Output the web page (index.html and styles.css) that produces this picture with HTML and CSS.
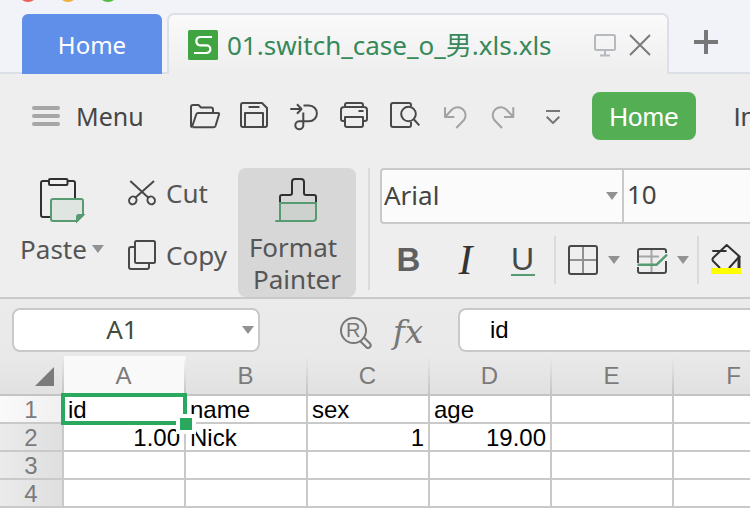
FILE: index.html
```html
<!DOCTYPE html>
<html lang="en">
<head>
<meta charset="utf-8">
<title>01.switch_case_o_男.xls.xls</title>
<link rel="stylesheet" href="styles.css">
</head>
<body>
<header class="titlebar">
  <div class="lights"><i class="light red"></i><i class="light amber"></i><i class="light green"></i></div>
  <nav class="tabs">
    <button class="tab-home">Home</button>
    <div class="tab-doc">
      <svg class="logo" width="30" height="30" viewBox="0 0 30 30"><rect width="30" height="30" rx="1.5" fill="#40a441"/><path d="M24 7H11.5a4.300 4.300 0 0 0 0 8.300H18.500a3.700 3.700 0 0 1 0 7.700H6" fill="none" stroke="#fff" stroke-width="2.200"/></svg>
      <span class="doc-name">01.switch_case_o_男.xls.xls</span>
      <svg width="24" height="24" viewBox="0 0 24 24" fill="none" stroke="#b6babf" stroke-width="2"><rect x="2" y="2" width="20" height="15" rx="1.500"/><path d="M12 17v5M7 22.500h10"/></svg>
      <button class="bare close" aria-label="Close tab"><svg width="22" height="22" viewBox="0 0 22 22" fill="none" stroke="#7b7b7d" stroke-width="2"><path d="M1 1L21 21M21 1L1 21"/></svg></button>
    </div>
    <button class="bare add" aria-label="New tab"><svg width="24" height="24" viewBox="0 0 24 24" stroke="#77777a" stroke-width="4"><path d="M12 0V24M0 12H24"/></svg></button>
  </nav>
</header>

<section class="quickbar">
  <button class="bare menu"><svg width="28" height="20" viewBox="0 0 28 20" stroke="#a6a6a6" stroke-width="4" stroke-linecap="round"><path d="M2 2H26M2 10H26M2 18H26"/></svg>Menu</button>
  <div class="quick-icons">
    <button class="bare" aria-label="Open"><svg class="ic" viewBox="0 0 32 32"><path d="M3 27Q2 27 2 26V7Q2 5 4 5H9.500L12 7.500H22Q24 7.500 24 9.500V13M3 27L7.300 14.300Q7.800 13 9 13H29Q30.500 13 30 14.500L26.500 26Q26 27.300 24.500 27.300H3.500"/></svg></button>
    <button class="bare" aria-label="Save"><svg class="ic" viewBox="0 0 32 32"><path d="M4 3H23L28 8V25Q28 27 26 27H4Q2 27 2 25V5Q2 3 4 3ZM9.500 7H20.500M6 27V13H24V27"/></svg></button>
    <button class="bare" aria-label="Export to PDF"><svg class="ic" viewBox="0 0 32 32"><path d="M1.300 9H12M8 4.300L12.500 9L8 13.700M14.500 5.500H20A7.900 7.900 0 0 1 20 21.300H10A4 4 0 1 0 14.300 25V12.500"/></svg></button>
    <button class="bare" aria-label="Print"><svg class="ic" viewBox="0 0 32 32"><path d="M6 7V5Q6 3 8 3H22Q24 3 24 5V7M6 21H4Q2 21 2 19V10Q2 7 5 7H25Q28 7 28 10V19Q28 21 26 21H24M6 17H24V25Q24 27 22 27H8Q6 27 6 25ZM19.500 11H24.500"/></svg></button>
    <button class="bare" aria-label="Print preview"><svg class="ic" viewBox="0 0 32 32"><path d="M22 6V5Q22 3 20 3H4Q2 3 2 5V25Q2 27 4 27H20Q22 27 22 25V22M25 19.500L30.300 25.300"/><circle cx="19.500" cy="14" r="7.300"/></svg></button>
    <button class="bare" aria-label="Undo"><svg class="ic pale" viewBox="0 0 32 32"><path d="M6 7.300V17H15.300M6 17L13 9.500A8 8 0 0 1 25 20L17.300 28"/></svg></button>
    <button class="bare" aria-label="Redo"><svg class="ic pale" viewBox="0 0 32 32"><path d="M24.300 7.300V17H15M24.300 17L17.300 9.500A8 8 0 0 0 5.300 20L13 28"/></svg></button>
    <button class="bare" aria-label="More commands"><svg class="ic more" viewBox="0 0 32 32"><path d="M7 11H21M7.700 16.700L14 23L20.300 16.700"/></svg></button>
  </div>
  <button class="ribbon-tab active">Home</button>
  <button class="ribbon-tab">Insert</button>
</section>

<section class="ribbon">
  <button class="bare paste">
    <svg width="48" height="48" viewBox="0 0 48 48" fill="none" stroke="#303030" stroke-width="2"><path d="M10.500 5H5Q3 5 3 7V39Q3 41 5 41H13M29.500 5H35Q37 5 37 7V23"/><rect x="11" y="3" width="18.500" height="6" rx="1"/><path d="M15 23H43Q45 23 45 25V39L39 45H15Q13 45 13 43V25Q13 23 15 23Z" fill="#dfe6e1" stroke="#589b73"/><path d="M45 39H41Q39 39 39 41V45Z" fill="#589b73" stroke="#589b73"/></svg>
    <span class="label">Paste<i class="caret"></i></span>
  </button>
  <div class="clip-list">
    <button class="bare"><svg class="ic" viewBox="0 0 32 32"><path d="M3.300 4L21.700 21M27 4L8 21"/><ellipse cx="5.800" cy="23.400" rx="3.600" ry="4" transform="rotate(30 5.800 23.400)"/><ellipse cx="24.200" cy="23.400" rx="3.600" ry="4" transform="rotate(-30 24.200 23.400)"/></svg>Cut</button>
    <button class="bare"><svg class="ic" viewBox="0 0 32 32"><rect x="8" y="2" width="20" height="22" rx="1.500"/><path d="M8 8H4Q2 8 2 10V28Q2 30 4 30H20Q22 30 22 28V24"/></svg>Copy</button>
  </div>
  <button class="bare painter">
    <svg width="48" height="48" viewBox="0 0 48 48" fill="none" stroke="#303030" stroke-width="2"><path d="M7 26V21Q7 19 9 19H17Q19 19 19 17V6Q19 3 22 3H28Q31 3 31 6V17Q31 19 33 19H41Q43 19 43 21V26"/><path d="M7 27H43V42Q43 45 40 45H7Z" fill="#cdd2ce" stroke="#589b73"/><path d="M2.300 45H7" stroke="#589b73"/></svg>
    <span>Format</span><span class="indent">Painter</span>
  </button>
  <div class="font-group">
    <div class="selects">
      <label class="pick family"><select aria-label="Font"><option>Arial</option></select></label>
      <label class="pick size"><select aria-label="Font size"><option>10</option></select></label>
    </div>
    <div class="formats">
      <button class="bare fmt bold" aria-label="Bold">B</button>
      <button class="bare fmt italic" aria-label="Italic">I</button>
      <button class="bare fmt under" aria-label="Underline"><span>U</span></button>
      <button class="bare drop divided" aria-label="Borders"><svg class="ic" viewBox="0 0 32 32"><path d="M16 3V29M3 16H29" stroke="#909090"/><rect x="2" y="2" width="28" height="28" rx="2"/></svg><i class="caret"></i></button>
      <button class="bare drop" aria-label="Table style"><svg class="ic" viewBox="0 0 32 32"><path d="M15.500 5V29M3 12.500H23" stroke="#a5a5a5"/><path d="M2 19V7Q2 5 4 5H28Q30 5 30 7V9M2 23V27Q2 29 4 29H28Q30 29 30 27V17" /><path d="M1.500 20.700H20.700L31 10.700" stroke="#589b73" stroke-width="2.500"/></svg><i class="caret"></i></button>
      <button class="bare drop divided" aria-label="Fill colour"><svg class="ic" viewBox="0 0 32 32"><path d="M10 24L3 17Q2 15.500 3 14L16.700 1L29.500 12.500L19 24M2.300 7H16.500" stroke="#303030"/><path d="M29 12V24" stroke="#303030" stroke-width="3"/><path d="M1 27H31" stroke="#ff0" stroke-width="6"/></svg></button>
    </div>
  </div>
</section>

<main class="sheet">
  <div class="formula-bar">
    <label class="name-box pick"><input value="A1" aria-label="Name box"></label>
    <button class="bare lookup" aria-label="Look up"><svg width="36" height="36" viewBox="0 0 36 36" fill="none" stroke="#777" stroke-width="2"><circle cx="15.500" cy="15.500" r="12.500"/><path d="M22 26L28.500 32.500Q30.500 33.500 32 32Q33.500 30.500 32 28.500L26 22.500"/><text x="8" y="22" class="lookup-r">R</text></svg></button>
    <button class="bare fx" aria-label="Insert function">fx</button>
    <input class="formula" value="id" aria-label="Formula">
  </div>
  <table>
    <colgroup><col class="c-head"><col span="6" class="c-data"></colgroup>
    <thead>
      <tr><th class="corner"><svg width="19" height="19" viewBox="0 0 19 19"><path d="M19 0V19H0Z" fill="#7b7b7b"/></svg></th><th scope="col" class="on">A</th><th scope="col">B</th><th scope="col">C</th><th scope="col">D</th><th scope="col">E</th><th scope="col">F</th></tr>
    </thead>
    <tbody>
      <tr><th scope="row" class="on">1</th><td class="cursor">id</td><td>name</td><td>sex</td><td>age</td><td></td><td></td></tr>
      <tr><th scope="row">2</th><td class="num">1.00</td><td>Nick</td><td class="num">1</td><td class="num">19.00</td><td></td><td></td></tr>
      <tr><th scope="row">3</th><td></td><td></td><td></td><td></td><td></td><td></td></tr>
      <tr><th scope="row">4</th><td></td><td></td><td></td><td></td><td></td><td></td></tr>
    </tbody>
  </table>
</main>
</body>
</html>
```
FILE: styles.css
```css
*, *::before, *::after { box-sizing: border-box; }
body {
  margin: 0;
  overflow: hidden;
  background: #eee;
  color: #555;
  font: 26px/32px "Noto Sans", "Noto Sans CJK SC", sans-serif;
}
svg { display: block; flex: none; }
button, input, select { font: inherit; color: inherit; }
.bare { border: 0; padding: 0; background: none; display: flex; align-items: center; justify-content: center; flex: none; }
.ic { width: 32px; height: 32px; fill: none; stroke: #484848; stroke-width: 2; stroke-linejoin: round; }
.pale { stroke: #a2a2a2; }
.more { stroke: #777; }
.caret { width: 12px; height: 8px; background: #929292; clip-path: polygon(0 0, 100% 0, 50% 100%); }

/* Title bar and document tabs */
.titlebar { position: relative; height: 74px; overflow: hidden; background: #f2f3f8; box-shadow: inset 0 -2px #dcdfe7; }
.lights { position: absolute; top: -18px; left: 18px; display: flex; gap: 20px; }
.light { width: 20px; height: 20px; border-radius: 50%; }
.red { background: #ec5f57; }
.amber { background: #f0b03f; }
.green { background: #51bb3f; }
.tabs { display: flex; height: 100%; padding: 13px 0 0 22px; }
.tab-home { width: 140px; margin-top: 1px; padding: 2px 0 0; border: 0; border-radius: 6px 6px 0 0; background: #608fe9; color: #fff; font-size: 24px; }
.tab-doc {
  display: flex; align-items: center; width: 502px; margin-left: 5px; padding: 0 16px 0 19px;
  border: 2px solid #dcdfe7; border-bottom: 0; border-radius: 7px 7px 0 0;
  background: linear-gradient(#fafafa, #eee); color: #36895a;
}
.doc-name { flex: 1; margin-left: 9px; white-space: nowrap; }
.close { margin-left: 12px; }
.add { margin: 0 25px; padding-bottom: 4px; }

/* Quick access */
.quickbar { display: flex; align-items: center; height: 94px; padding: 0 0 10px 32px; overflow: hidden; }
.menu { width: 148px; justify-content: flex-start; gap: 16px; color: #464646; font-size: 25px; }
.quick-icons { display: flex; flex: none; margin-right: 12px; }
.quick-icons .bare { width: 50px; height: 48px; }
.ribbon-tab {
  flex: none; min-width: 104px; height: 48px; padding: 2px 17px 0; margin-right: 18px; border: 0; border-radius: 8px;
  background: none; color: #464646; font: 26px/46px "Liberation Sans", sans-serif;
}
.ribbon-tab.active { background: #53ae54; color: #fff; }

/* Ribbon */
.ribbon { display: flex; height: 131px; padding-left: 12px; border-bottom: 2px solid #c9c9c9; overflow: hidden; }
.paste { width: 100px; flex-direction: column; justify-content: flex-start; padding-top: 8px; gap: 9px; }
.label { display: flex; align-items: center; gap: 5px; }
.clip-list { display: flex; flex: none; flex-direction: column; justify-content: flex-start; gap: 30px; width: 126px; padding: 9px 0 0 15px; }
.clip-list .bare { justify-content: flex-start; gap: 7px; }
.painter { width: 118px; flex-direction: column; align-items: center; justify-content: flex-start; padding-top: 8px; border-radius: 8px; background: #d7d7d7; }
.painter svg { margin-bottom: 7px; }
.painter span { margin-right: 8px; }
.painter .indent { margin: 0; }
.font-group { flex: 1; min-width: 0; margin-left: 12px; padding-left: 10px; border-left: 2px solid #dadada; height: 122px; }
.selects { display: flex; height: 56px; }
.pick { position: relative; }
.pick::after { content: ""; position: absolute; right: 6px; top: 24px; width: 12px; height: 8px; background: #929292; clip-path: polygon(0 0, 100% 0, 50% 100%); }
.pick select { width: 100%; height: 56px; padding: 0 2px 2px; border: 2px solid #c9c9c9; background: #fbfbfb; color: #444; appearance: none; }
.family { flex: none; width: 244px; }
.family select { border-radius: 4px 0 0 4px; }
.size { flex: 1 0 160px; margin-left: -2px; }
.size select { padding: 0 3px 4px; }
.formats { display: flex; align-items: center; height: 72px; }
.fmt { width: 57px; height: 48px; }
.bold { color: #606060; font: bold 33px/48px "Liberation Sans", sans-serif; }
.italic { color: #333; font: italic 42px/48px "Liberation Serif", serif; }
.under { color: #484848; font: 32px/30px "Liberation Sans", sans-serif; }
.under span { width: 24px; border-bottom: 2px solid #589b73; }
.drop { gap: 9px; height: 48px; padding: 0 5px 0 11px; }
.divided { margin-left: 3px; border-left: 2px solid #dadada; }

/* Formula bar */
.sheet { overflow: hidden; background: linear-gradient(#ebebeb, #e9e9e9 57px); }
.formula-bar { display: flex; height: 57px; padding: 9px 0 4px 12px; }
.name-box { width: 248px; }
.name-box::after { top: 18px; }
.name-box input { width: 100%; height: 44px; padding: 0 28px 2px 0; border: 2px solid #c9c9c9; border-radius: 8px; background: #fff; color: #434b3d; text-align: center; }
.lookup { width: 36px; margin-left: 78px; padding-top: 6px; }
.lookup-r { font: 20px "Liberation Sans", sans-serif; fill: #777; stroke: none; }
.fx { width: 48px; margin: 4px 26px 0 10px; color: #777; font: italic 32px/40px "DejaVu Serif", serif; }
.formula { flex: 1; min-width: 0; height: 44px; padding: 0 30px; border: 2px solid #c9c9c9; border-right: 0; border-radius: 8px 0 0 8px; background: #fff; color: #000; font: 24px "Liberation Sans", sans-serif; }

/* Grid */
table { width: 796px; table-layout: fixed; border-collapse: separate; border-spacing: 0; font: 24px/24px "Liberation Sans", sans-serif; }
.c-head { width: 64px; }
.c-data { width: 122px; }
th, td { padding: 2px 0 0; border: 0 solid #c9c9c9; border-width: 0 2px 2px 0; }
th { color: #7b7b7b; font-weight: normal; }
thead th {
  height: 40px; padding-right: 3px; border-right: 0; border-bottom-color: #c4c4c4;
  background: linear-gradient(#e9e9e9, #c4c4c4) right / 2px 100% no-repeat, linear-gradient(#e9e9e9, #e1e1e1);
}
thead .on { background: linear-gradient(#f9f9f9, #c4c4c4) right / 2px 100% no-repeat, #f9f9f9; }
.corner svg { margin: 0 7px 0 auto; }
tbody th { height: 28px; background: linear-gradient(90deg, #ebebeb, #dfdfdf); }
tbody .on { background: linear-gradient(90deg, #fafafa, #f0f0f0); }
td { height: 28px; padding: 2px 4px 0; background: #fff; color: #000; }
.num { text-align: right; }
.cursor { position: relative; }
.cursor::before { content: ""; position: absolute; inset: -3px; border: 4px solid #2aa85e; }
.cursor::after { content: ""; position: absolute; right: -12px; bottom: -12px; width: 20px; height: 20px; border: 4px solid #fff; background: #2aa85e; }
```
